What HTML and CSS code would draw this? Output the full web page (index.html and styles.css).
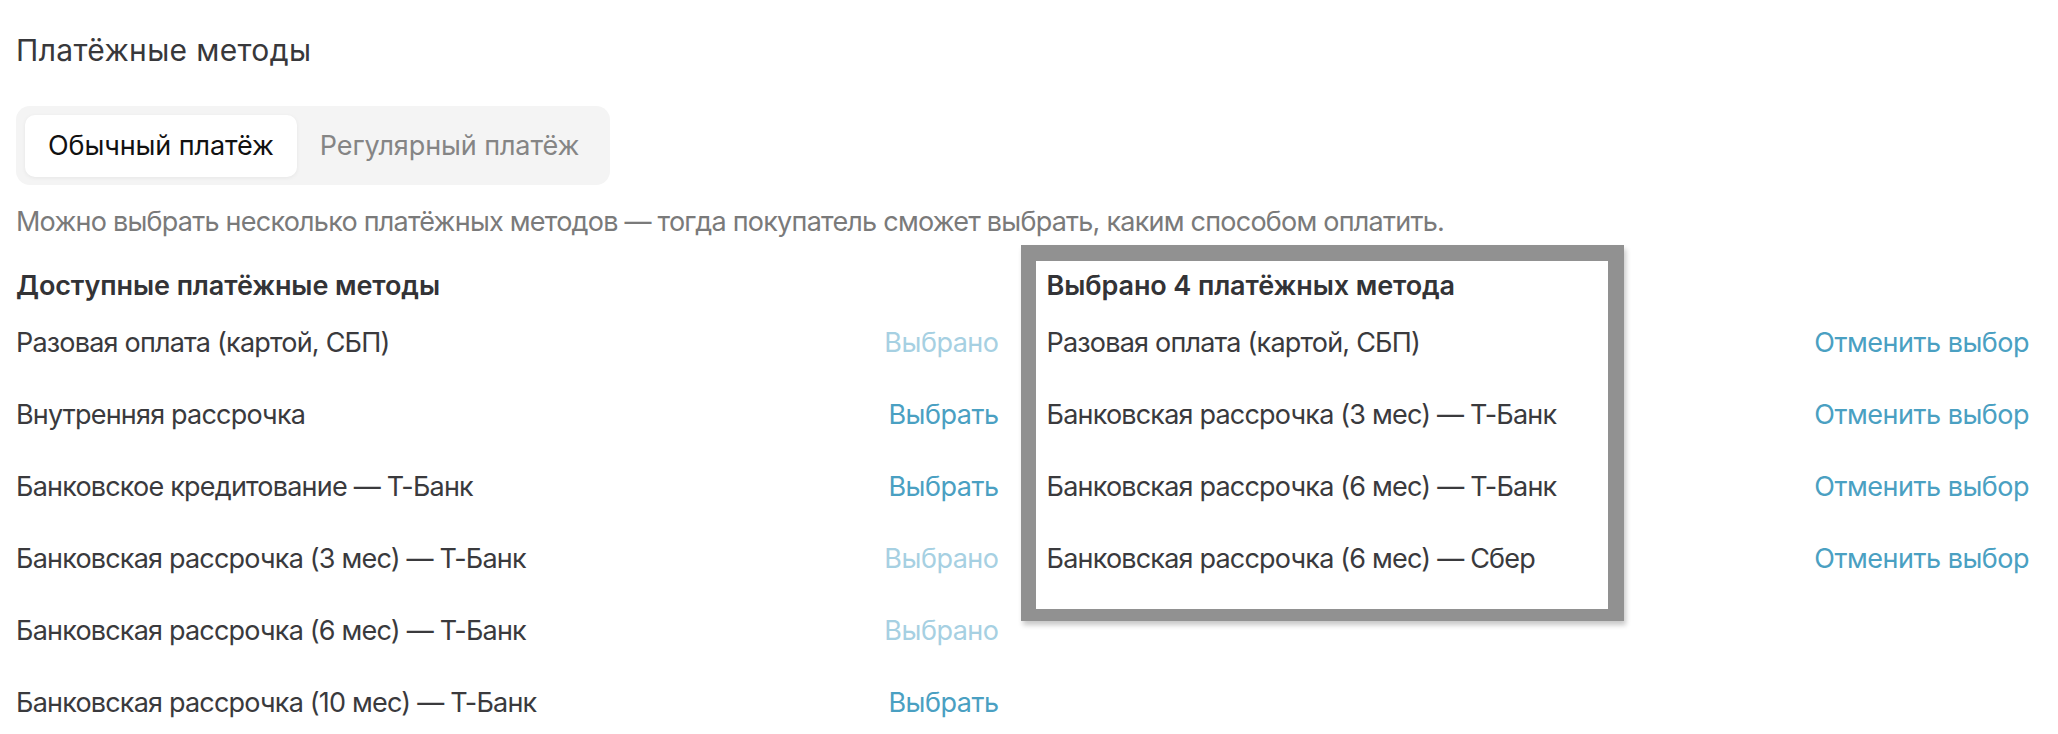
FILE: index.html
```html
<!DOCTYPE html>
<html lang="ru">
<head>
<meta charset="utf-8">
<title>Платёжные методы</title>
<link rel="stylesheet" href="styles.css">
</head>
<body>
<div class="page">
  <h1 class="title">Платёжные методы</h1>
  <div class="tabs">
    <button class="tab tab-active">Обычный платёж</button>
    <button class="tab">Регулярный платёж</button>
  </div>
  <p class="hint">Можно выбрать несколько платёжных методов — тогда покупатель сможет выбрать, каким способом оплатить.</p>
  <div class="columns">
    <section class="col">
      <h2 class="col-title">Доступные платёжные методы</h2>
      <ul class="list">
        <li class="row"><span class="name">Разовая оплата (картой, СБП)</span><span class="action action-done">Выбрано</span></li>
        <li class="row"><span class="name">Внутренняя рассрочка</span><span class="action">Выбрать</span></li>
        <li class="row"><span class="name">Банковское кредитование — Т-Банк</span><span class="action">Выбрать</span></li>
        <li class="row"><span class="name">Банковская рассрочка (3 мес) — Т-Банк</span><span class="action action-done">Выбрано</span></li>
        <li class="row"><span class="name">Банковская рассрочка (6 мес) — Т-Банк</span><span class="action action-done">Выбрано</span></li>
        <li class="row"><span class="name">Банковская рассрочка (10 мес) — Т-Банк</span><span class="action">Выбрать</span></li>
      </ul>
    </section>
    <section class="col col-selected">
      <div class="highlight"></div>
      <h2 class="col-title">Выбрано 4 платёжных метода</h2>
      <ul class="list">
        <li class="row"><span class="name">Разовая оплата (картой, СБП)</span><span class="action">Отменить выбор</span></li>
        <li class="row"><span class="name">Банковская рассрочка (3 мес) — Т-Банк</span><span class="action">Отменить выбор</span></li>
        <li class="row"><span class="name">Банковская рассрочка (6 мес) — Т-Банк</span><span class="action">Отменить выбор</span></li>
        <li class="row"><span class="name">Банковская рассрочка (6 мес) — Сбер</span><span class="action">Отменить выбор</span></li>
      </ul>
    </section>
  </div>
</div>
</body>
</html>
```
FILE: styles.css
```css
* { box-sizing: border-box; }
html, body { margin: 0; padding: 0; background: #fff; }
body {
  font-family: Inter, "Noto Sans", sans-serif;
  color: #333336;
  -webkit-font-smoothing: antialiased;
}
.page {
  padding: 30px 29px 0 16px;
}
.title {
  margin: 0;
  font-size: 30px;
  font-weight: 400;
  line-height: 40px;
  color: #38383b;
  letter-spacing: 0.35px;
}
.tabs {
  display: inline-flex;
  margin-top: 36px;
  padding: 9px 8px 8px 9px;
  background: #f4f4f4;
  border-radius: 14px;
}
.tab {
  border: 0;
  background: transparent;
  font-family: inherit;
  font-size: 27px;
  letter-spacing: -0.1px;
  line-height: 62px;
  padding: 0 23px;
  color: #858585;
  border-radius: 10px;
  cursor: pointer;
}
.tab-active {
  background: #fff;
  color: #111;
  box-shadow: 0 1px 4px rgba(0,0,0,0.06);
}
.hint {
  margin: 17px 0 0;
  font-size: 27px;
  letter-spacing: -0.77px;
  line-height: 40px;
  color: #7a7a7a;
}
.columns {
  display: grid;
  grid-template-columns: 1fr 1fr;
  column-gap: 48px;
  margin-top: 24px;
}
.col { position: relative; }
.col-title {
  margin: 0;
  font-size: 27px;
  font-weight: 600;
  letter-spacing: -0.1px;
  line-height: 40px;
  color: #333336;
}
.list {
  list-style: none;
  margin: 0;
  padding: 0;
}
.row {
  display: flex;
  justify-content: space-between;
  align-items: center;
  height: 72px;
  font-size: 27px;
  letter-spacing: -0.8px;
}
.name { color: #3a3a3d; }
.action { color: #4aa0c2; letter-spacing: -0.5px; }
.action-done { color: #a6d0e2; }
.highlight {
  position: absolute;
  left: -26px;
  top: -21px;
  width: 603px;
  height: 376px;
  border: 15px solid #919191;
  border-top-width: 16px;
  border-right-width: 16px;
  border-bottom-width: 12px;
  box-shadow: 2px 4px 5px rgba(0,0,0,0.22);
  pointer-events: none;
}
```
